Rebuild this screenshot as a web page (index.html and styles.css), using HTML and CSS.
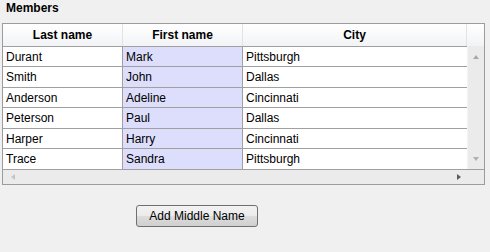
FILE: index.html
```html
<!DOCTYPE html>
<html lang="en">
<head>
  <meta charset="UTF-8" />
  <title>Members</title>
  <link rel="stylesheet" href="styles.css">
</head>
<body>
<div class="panel">
  <div class="title">Members</div>

  <div class="grid">
    <div class="head">
      <div class="hcell">Last name</div>
      <div class="hcell">First name</div>
      <div class="hcell">City</div>
      <div class="hcell"></div>
    </div>

    <div class="body">
      <div class="rows">
        <div class="row"><div class="cell">Durant</div><div class="cell first">Mark</div><div class="cell">Pittsburgh</div></div>
        <div class="row"><div class="cell">Smith</div><div class="cell first">John</div><div class="cell">Dallas</div></div>
        <div class="row"><div class="cell">Anderson</div><div class="cell first">Adeline</div><div class="cell">Cincinnati</div></div>
        <div class="row"><div class="cell">Peterson</div><div class="cell first">Paul</div><div class="cell">Dallas</div></div>
        <div class="row"><div class="cell">Harper</div><div class="cell first">Harry</div><div class="cell">Cincinnati</div></div>
        <div class="row"><div class="cell">Trace</div><div class="cell first">Sandra</div><div class="cell">Pittsburgh</div></div>
      </div>
      <div class="vscroll">
        <span class="arr up"></span>
        <span class="arr down"></span>
      </div>
    </div>

    <div class="foot">
      <div class="hscroll">
        <span class="arr left"></span>
        <span class="arr right"></span>
      </div>
      <div class="corner"></div>
    </div>
  </div>

  <div class="actions">
    <button class="btn">Add Middle Name</button>
  </div>
</div>
</body>
</html>
```

FILE: styles.css
```css
body { margin: 0; background: #f0f0f0; font-family: "Liberation Sans", Arial, sans-serif; font-size: 12px; color: #000; }
.panel { padding: 1px 0 0 2px; }
.title { font-weight: bold; height: 22px; line-height: 14px; padding-left: 4px; }

.grid { width: 483px; height: 162px; box-sizing: border-box; border: 1px solid #9c9c9c; background: #fff; display: flex; flex-direction: column; }

.head { display: grid; grid-template-columns: 120px 120px 224px 17px; height: 22px; flex: none; background: linear-gradient(#ffffff, #f2f3f5); }
.hcell { font-weight: bold; text-align: center; line-height: 22px; border-right: 1px solid #e2e3e5; box-sizing: border-box; }
.hcell:last-child { border-right: none; }

.body { display: flex; height: 123px; flex: none; }
.rows { width: 464px; }
.row { display: grid; grid-template-columns: 120px 120px 224px; height: 20px; box-sizing: border-box; border-top: 1px solid #a0a0a0; }
.row:nth-child(even) { height: 21px; }
.cell { padding: 1px 0 0 3px; line-height: 18px; border-right: 1px solid #a0a0a0; }
.row:nth-child(even) .cell { line-height: 19px; }
.cell:last-child { border-right: none; }
.cell.first { background: #dcdefc; }

.vscroll { width: 17px; background: #ebebeb; border-left: 1px solid #f4f4f4; box-sizing: border-box; display: flex; flex-direction: column; justify-content: space-between; align-items: center; padding: 9px 0 8px; }

.foot { display: flex; height: 15px; flex: none; box-sizing: border-box; border-top: 1px solid #a0a0a0; }
.hscroll { width: 464px; background: #ebebeb; display: flex; justify-content: space-between; align-items: center; padding: 0 6px 0 8px; box-sizing: border-box; }
.corner { width: 17px; background: #ebebeb; }

.arr { width: 0; height: 0; border-style: solid; }
.arr.up { border-width: 0 3.5px 4px; border-color: transparent transparent #a8a8a8; }
.arr.down { border-width: 4px 3.5px 0; border-color: #b0b0b0 transparent transparent; }
.arr.left { border-width: 3.5px 4px 3.5px 0; border-color: transparent #c4c4c4 transparent transparent; }
.arr.right { border-width: 3.5px 0 3.5px 4px; border-color: transparent transparent transparent #5c5c5c; }

.actions { padding: 20px 0 0 134px; }
.btn { width: 122px; height: 22px; font-family: "Liberation Sans", Arial, sans-serif; font-size: 12px; color: #000; border: 1px solid #707070; border-radius: 3px; background: linear-gradient(#f2f2f2 0%, #ebebeb 50%, #dddddd 51%, #cfcfcf 100%); padding: 0; }
```
